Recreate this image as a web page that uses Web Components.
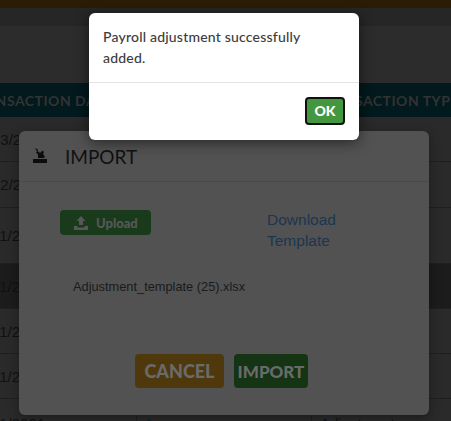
<!DOCTYPE html>
<html><head><meta charset="utf-8"><style>
html,body{margin:0;padding:0;background:#2a2a2a;overflow:hidden}
body{width:451px;height:421px;position:relative;overflow:hidden}
</style></head><body>
<app-page></app-page>
<import-modal></import-modal>
<alert-dialog></alert-dialog>
<script>
const UI='"Lato","Noto Sans",sans-serif';
function def(name,html){customElements.define(name,class extends HTMLElement{constructor(){super();this.attachShadow({mode:'open'}).innerHTML=html;}});}
const rows=[['45px','3/2021','#2a2a2a'],['46px','2/2021','#2a2a2a'],['56px','1/2021','#2a2a2a'],['45px','1/2021','#1c1c1c'],['45px','1/2021','#2a2a2a'],['45px','1/2021','#2a2a2a'],['45px','1/2021','#2a2a2a']];
def('app-page',`<style>
:host{display:block;width:451px;height:421px;overflow:hidden;font-family:"Liberation Sans",sans-serif}
.top{height:8px;background:#2b1c05}.sub{height:18px;background:#262626}.gap{height:57px;background:#2c2c2c}
.th{height:34px;background:#02191d;color:#333;font:700 14px ${UI};letter-spacing:.5px;display:grid;grid-template-columns:311px 1fr;align-items:center;white-space:nowrap;overflow:hidden}
.th span:first-child{margin-left:-33px}.th span:last-child{margin-left:4px}
.r{display:grid;grid-template-columns:136px 175px 1fr;border-bottom:1px solid #1f1f1f;box-sizing:border-box;color:#111;font-size:15px;align-items:center}
.r span:first-child{margin-left:-8px}
.r span:nth-child(n+2){padding-left:9px}
.last{align-items:stretch}
.last span{padding-top:16px}
.last span:nth-child(n+2){border-left:1px solid #1f1f1f;padding-left:8px}
.last span:nth-child(2){color:#0d2030}
</style>
<div class="top"></div><div class="sub"></div><div class="gap"></div>
<div class="th"><span>TRANSACTION DATE</span><span>TRANSACTION TYPE</span></div>
${rows.map((r,i)=>`<div class="r${i==6?' last':''}" style="height:${r[0]};background:${r[2]}"><span>1${r[1]}</span><span>${i==6?'1':''}</span><span>${i==6?'Adjustment':''}</span></div>`).join('')}`);
def('import-modal',`<style>
:host{position:absolute;left:19px;top:131px;width:410px;height:284px;background:#525252;border-radius:6px;box-shadow:0 3px 12px rgba(0,0,0,.35);display:flex;flex-direction:column;font-family:"Liberation Sans",sans-serif}
header{height:51px;box-sizing:border-box;border-bottom:1px solid #484848;display:flex;align-items:center;padding-left:14px;gap:18px;font:400 19px ${UI};color:#111}
svg{display:block}
header svg{margin-top:-2px}
.body{display:grid;grid-template-columns:207px 1fr;padding:28px 0 0 41px;height:60px}
.up{width:91px;height:25px;background:#193b1b;border-radius:4px;display:flex;align-items:center;gap:8px;padding-left:14px;box-sizing:border-box;color:#575757;font:900 13px ${UI}}
.dl{color:#1b3651;font-size:15.5px;line-height:21px;width:90px;margin-top:-1px}
.file{margin:9px 0 0 54px;font-size:12.8px;color:#1a1a1a;line-height:16px}
.btns{display:flex;gap:10px;margin:59px 0 0 116px}
.b{height:34px;border-radius:4px;display:flex;align-items:center;justify-content:center;font:900 18px ${UI};color:#6a6a6a}
.c{width:89px;background:#4f390c}.i{width:74px;background:#143414;font-size:17px}
</style>
<header><svg width="14" height="15" viewBox="0 0 14 15"><path fill="#0c0c0c" d="M0 11h14v4H0zM2 0l3 1.500-.5 1.500L7 5l2.500-2.500L11 4l-1 2 1.500 2v2H5V6.500L3 4.500l1-1z"/></svg><span>IMPORT</span></header>
<div class="body"><div class="up"><svg width="14" height="14" viewBox="0 0 14 14"><path fill="#575757" d="M7 0l4.500 5H9v4H5V5H2.500zM0 10h3.500v1.500h7V10H14v4H0z"/></svg><span>Upload</span></div><a class="dl">Download Template</a></div>
<div class="file">Adjustment_template (25).xlsx</div>
<div class="btns"><div class="b c">CANCEL</div><div class="b i">IMPORT</div></div>`);
def('alert-dialog',`<style>
:host{position:absolute;left:89px;top:13px;width:270px;height:127px;background:#fff;border-radius:6px;box-shadow:0 3px 14px rgba(0,0,0,.5);display:flex;flex-direction:column}
.t{height:70px;box-sizing:border-box;border-bottom:1px solid #e3e3e3;padding:13px 14px 0;font:500 14px/21px ${UI};color:#3c3c3c;letter-spacing:.2px}
.f{flex:1;display:flex;justify-content:flex-end;align-items:flex-start;padding:14px 14px 0 0}
.ok{width:40px;height:28px;box-sizing:border-box;border:2px solid #111;border-radius:4px;background:#43983f;color:#fff;font:900 14px/24px ${UI};text-align:center}
</style><div class="t">Payroll adjustment successfully added.</div><div class="f"><div class="ok">OK</div></div>`);
</script></body></html>
